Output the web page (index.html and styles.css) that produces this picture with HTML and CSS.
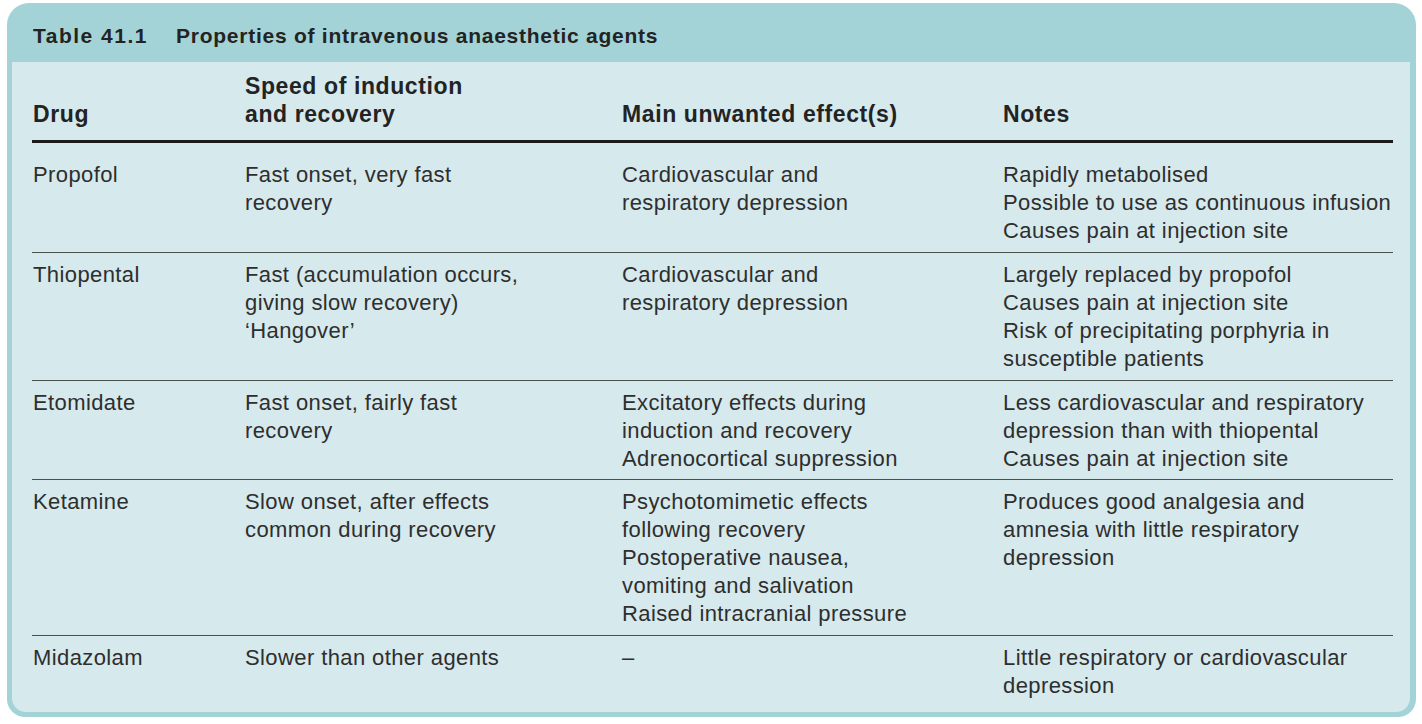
FILE: index.html
```html
<!DOCTYPE html>
<html lang="en">
<head>
<meta charset="utf-8">
<title>Table 41.1 Properties of intravenous anaesthetic agents</title>
<link rel="stylesheet" href="styles.css">
</head>
<body>
<div class="card">
  <div class="caption"><span class="num">Table 41.1</span><span class="cap-text">Properties of intravenous anaesthetic agents</span></div>
  <div class="panel">
    <table class="props">
      <colgroup>
        <col class="c-drug"><col class="c-speed"><col class="c-effect"><col class="c-notes">
      </colgroup>
      <thead>
        <tr>
          <th>Drug</th>
          <th>Speed of induction<br>and recovery</th>
          <th>Main unwanted effect(s)</th>
          <th>Notes</th>
        </tr>
      </thead>
      <tbody>
        <tr class="first">
          <td>Propofol</td>
          <td>Fast onset, very fast<br>recovery</td>
          <td>Cardiovascular and<br>respiratory depression</td>
          <td>Rapidly metabolised<br>Possible to use as continuous infusion<br>Causes pain at injection site</td>
        </tr>
        <tr>
          <td>Thiopental</td>
          <td>Fast (accumulation occurs,<br>giving slow recovery)<br>‘Hangover’</td>
          <td>Cardiovascular and<br>respiratory depression</td>
          <td>Largely replaced by propofol<br>Causes pain at injection site<br>Risk of precipitating porphyria in<br>susceptible patients</td>
        </tr>
        <tr class="tight">
          <td>Etomidate</td>
          <td>Fast onset, fairly fast<br>recovery</td>
          <td>Excitatory effects during<br>induction and recovery<br>Adrenocortical suppression</td>
          <td>Less cardiovascular and respiratory<br>depression than with thiopental<br>Causes pain at injection site</td>
        </tr>
        <tr>
          <td>Ketamine</td>
          <td>Slow onset, after effects<br>common during recovery</td>
          <td>Psychotomimetic effects<br>following recovery<br>Postoperative nausea,<br>vomiting and salivation<br>Raised intracranial pressure</td>
          <td>Produces good analgesia and<br>amnesia with little respiratory<br>depression</td>
        </tr>
        <tr class="last">
          <td>Midazolam</td>
          <td>Slower than other agents</td>
          <td>–</td>
          <td>Little respiratory or cardiovascular<br>depression</td>
        </tr>
      </tbody>
    </table>
  </div>
</div>
</body>
</html>
```

FILE: styles.css
```css
html, body {
  margin: 0;
  padding: 0;
  background: #ffffff;
}

body {
  padding: 3px 6px 0 7px;
  font-family: "Liberation Sans", Arial, Helvetica, sans-serif;
  color: #2e2e2e;
}

.card {
  width: 1409px;
  height: 714px;
  box-sizing: border-box;
  background: #a3d3d6;
  border-radius: 22px 22px 18px 18px;
  display: flex;
  flex-direction: column;
  padding: 0 6px 5px 5px;
}

.caption {
  height: 59px;
  box-sizing: border-box;
  padding: 19px 0 0 21px;
  font-size: 21px;
  line-height: 28px;
  font-weight: bold;
  color: #232323;
  white-space: nowrap;
}

.caption .num {
  letter-spacing: 1.5px;
  margin-right: 28px;
}

.caption .cap-text {
  letter-spacing: 0.75px;
}

.panel {
  flex: 1;
  background: #d6e9ec;
  border-radius: 0 0 14px 14px;
  padding: 10px 0 0 20px;
}

.props {
  border-collapse: collapse;
  width: 1361px;
  font-size: 22px;
  line-height: 28px;
  letter-spacing: 0.4px;
}

.c-drug { width: 212px; }
.c-speed { width: 377px; }
.c-effect { width: 381px; }
.c-notes { width: 391px; }

.props th {
  text-align: left;
  vertical-align: bottom;
  font-weight: bold;
  font-size: 23px;
  letter-spacing: 0.6px;
  color: #232323;
  padding: 0 0 12px 1px;
  border-bottom: 3px solid #1c1c1c;
  white-space: nowrap;
}

.props td {
  vertical-align: top;
  padding: 8px 0 7px 1px;
  border-bottom: 1px solid #4a4f50;
  white-space: nowrap;
}

.props tr.first td {
  padding-top: 18px;
}

.props tr.tight td {
  padding-bottom: 6px;
}

.props tr.last td {
  border-bottom: none;
}
```
